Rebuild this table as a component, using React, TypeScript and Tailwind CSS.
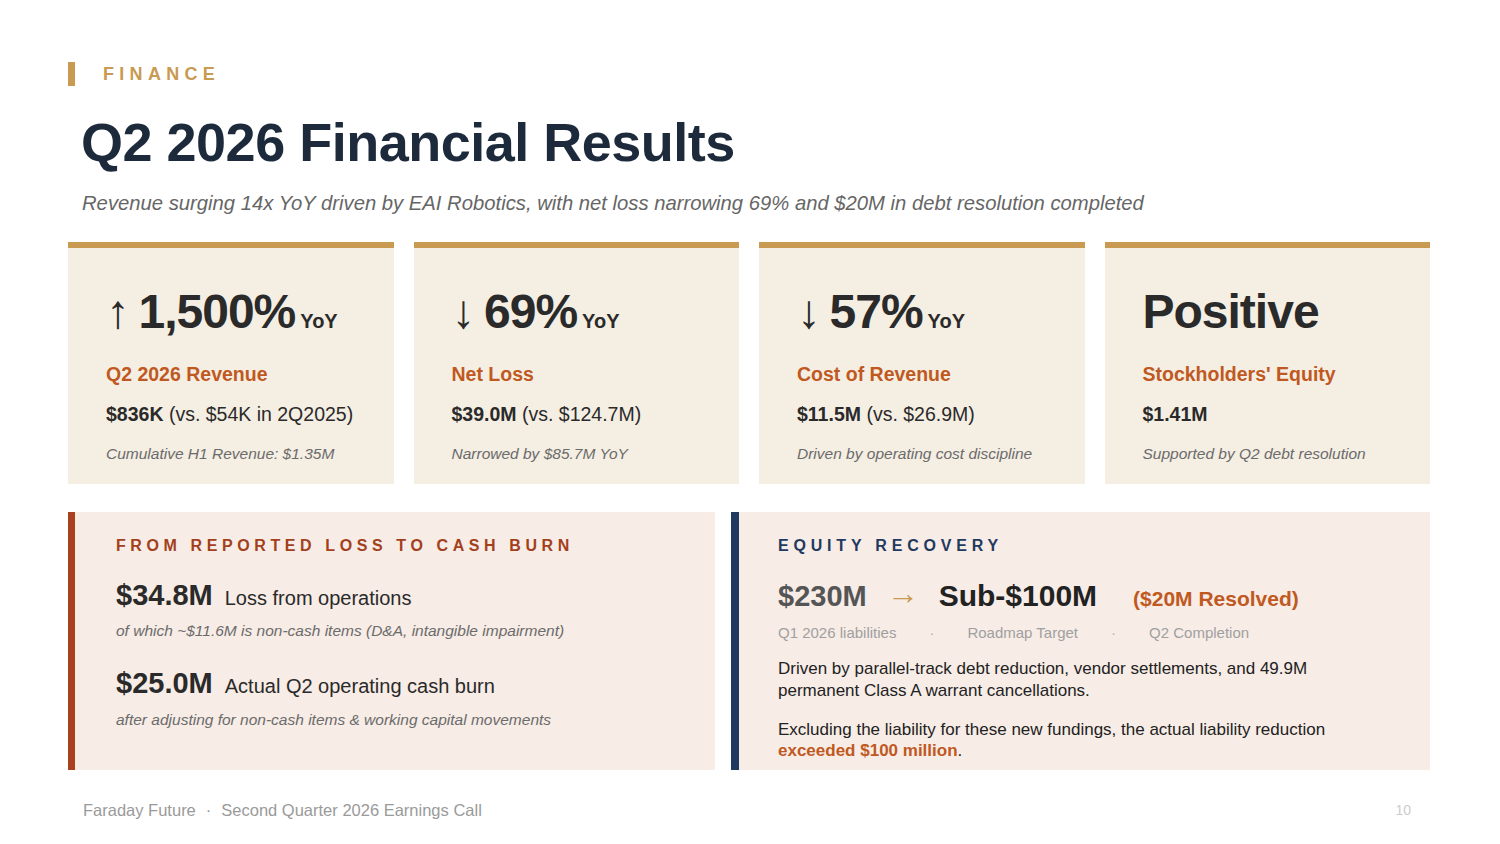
import React from "react";

const cards = [
  {
    arrow: "↑",
    big: "1,500%",
    yoy: true,
    label: "Q2 2026 Revenue",
    strong: "$836K",
    rest: " (vs. $54K in 2Q2025)",
    note: "Cumulative H1 Revenue: $1.35M",
  },
  {
    arrow: "↓",
    big: "69%",
    yoy: true,
    label: "Net Loss",
    strong: "$39.0M",
    rest: " (vs. $124.7M)",
    note: "Narrowed by $85.7M YoY",
  },
  {
    arrow: "↓",
    big: "57%",
    yoy: true,
    label: "Cost of Revenue",
    strong: "$11.5M",
    rest: " (vs. $26.9M)",
    note: "Driven by operating cost discipline",
  },
  {
    arrow: "",
    big: "Positive",
    yoy: false,
    label: "Stockholders' Equity",
    strong: "$1.41M",
    rest: "",
    note: "Supported by Q2 debt resolution",
  },
];

export default function App() {
  return (
    <div
      className="w-[1500px] h-[844px] bg-white overflow-hidden"
      style={{ fontFamily: '"Liberation Sans", Arial, Helvetica, sans-serif' }}
    >
      <div className="pl-[68px] pr-[70px] pt-[62px]">
        {/* Eyebrow */}
        <div className="flex items-center h-[24px]">
          <div className="w-[7px] h-[24px] bg-[#c99a52]" />
          <div className="ml-[28px] text-[18px] leading-[24px] font-bold tracking-[5.3px] text-[#c99a52]">
            FINANCE
          </div>
        </div>

        {/* Title */}
        <h1 className="mt-[24px] ml-[13px] text-[54px] leading-[65px] font-bold tracking-[-0.5px] text-[#1d2a3c]">
          Q2 2026 Financial Results
        </h1>
        <p className="mt-[14px] ml-[14px] text-[20.25px] leading-[28px] italic text-[#666666]">
          Revenue surging 14x YoY driven by EAI Robotics, with net loss narrowing 69% and $20M in debt resolution completed
        </p>

        {/* KPI cards */}
        <div className="mt-[25px] grid grid-cols-4 gap-[20px]">
          {cards.map((c, i) => (
            <div key={i} className="bg-[#f5eee3] border-t-[6px] border-[#c99a52] pl-[38px] pr-[12px] pt-[36px] pb-[20px]">
              <div className="flex items-baseline h-[56px] leading-[56px] text-[#2a2a2a]">
                {c.arrow && (
                  <span className="text-[47px] font-normal mr-[9px] text-[#2a2a2a]">{c.arrow}</span>
                )}
                <span className="text-[48px] font-bold tracking-[-1px]">{c.big}</span>
                {c.yoy && <span className="ml-[5px] text-[20px] font-bold">YoY</span>}
              </div>
              <div className="mt-[22px] text-[19.5px] leading-[24px] font-bold text-[#c0591f]">{c.label}</div>
              <div className="mt-[16px] text-[19.5px] leading-[24px] text-[#2a2a2a]">
                <span className="font-bold">{c.strong}</span>
                {c.rest}
              </div>
              <div className="mt-[18px] text-[15.5px] leading-[20px] italic text-[#6b6b6b]">{c.note}</div>
            </div>
          ))}
        </div>

        {/* Bottom panels */}
        <div className="mt-[28px] grid grid-cols-[647fr_699fr] gap-[16px]">
          <div className="bg-[#f7ece6] border-l-[7px] border-[#a8421e] pl-[41px] pt-[24px] pb-[20px]">
            <div className="text-[16px] leading-[20px] font-bold tracking-[4.6px] text-[#a3401c]">
              FROM REPORTED LOSS TO CASH BURN
            </div>
            <div className="mt-[21px] flex items-baseline h-[36px] leading-[36px] text-[#2a2a2a]">
              <span className="text-[29px] font-bold">$34.8M</span>
              <span className="ml-[12px] text-[20px]">Loss from operations</span>
            </div>
            <div className="mt-[8px] text-[15.5px] leading-[20px] italic text-[#6b6b6b]">
              of which ~$11.6M is non-cash items (D&amp;A, intangible impairment)
            </div>
            <div className="mt-[24px] flex items-baseline h-[36px] leading-[36px] text-[#2a2a2a]">
              <span className="text-[29px] font-bold">$25.0M</span>
              <span className="ml-[12px] text-[20px]">Actual Q2 operating cash burn</span>
            </div>
            <div className="mt-[9px] text-[15.5px] leading-[20px] italic text-[#6b6b6b]">
              after adjusting for non-cash items &amp; working capital movements
            </div>
          </div>

          <div className="bg-[#f7ece6] border-l-[8px] border-[#1f3a5f] pl-[39px] pt-[24px] pb-[9px]">
            <div className="text-[16px] leading-[20px] font-bold tracking-[4.8px] text-[#1f3a5f]">
              EQUITY RECOVERY
            </div>
            <div className="mt-[21px] flex items-baseline h-[36px] leading-[36px]">
              <span className="text-[29px] font-bold text-[#555555]">$230M</span>
              <span className="ml-[20px] mr-[20px] text-[32px] font-normal text-[#c99a52] relative -top-[2px]">→</span>
              <span className="text-[30px] font-bold text-[#222222]">Sub-$100M</span>
              <span className="ml-[36px] text-[21px] font-bold text-[#c0591f]">($20M Resolved)</span>
            </div>
            <div className="mt-[10px] flex items-center text-[15px] leading-[20px] text-[#a0a0a0]">
              <span>Q1 2026 liabilities</span>
              <span className="mx-[33px] text-[#b5b5b5]">·</span>
              <span>Roadmap Target</span>
              <span className="mx-[33px] text-[#b5b5b5]">·</span>
              <span>Q2 Completion</span>
            </div>
            <p className="mt-[15px] max-w-[575px] text-[17px] leading-[22px] text-[#222222]">
              Driven by parallel-track debt reduction, vendor settlements, and 49.9M permanent Class A warrant cancellations.
            </p>
            <p className="mt-[17px] max-w-[575px] text-[17px] leading-[21px] text-[#222222]">
              Excluding the liability for these new fundings, the actual liability reduction{" "}
              <span className="font-bold text-[#c0591f]">exceeded $100 million</span>.
            </p>
          </div>
        </div>

        {/* Footer */}
        <div className="mt-[30px] flex items-center justify-between h-[20px]">
          <div className="ml-[15px] text-[16.5px] leading-[20px] text-[#9a9a9a]">
            Faraday Future<span className="mx-[10px]">·</span>Second Quarter 2026 Earnings Call
          </div>
          <div className="mr-[19px] text-[14px] leading-[20px] text-[#cccccc]">10</div>
        </div>
      </div>
    </div>
  );
}
